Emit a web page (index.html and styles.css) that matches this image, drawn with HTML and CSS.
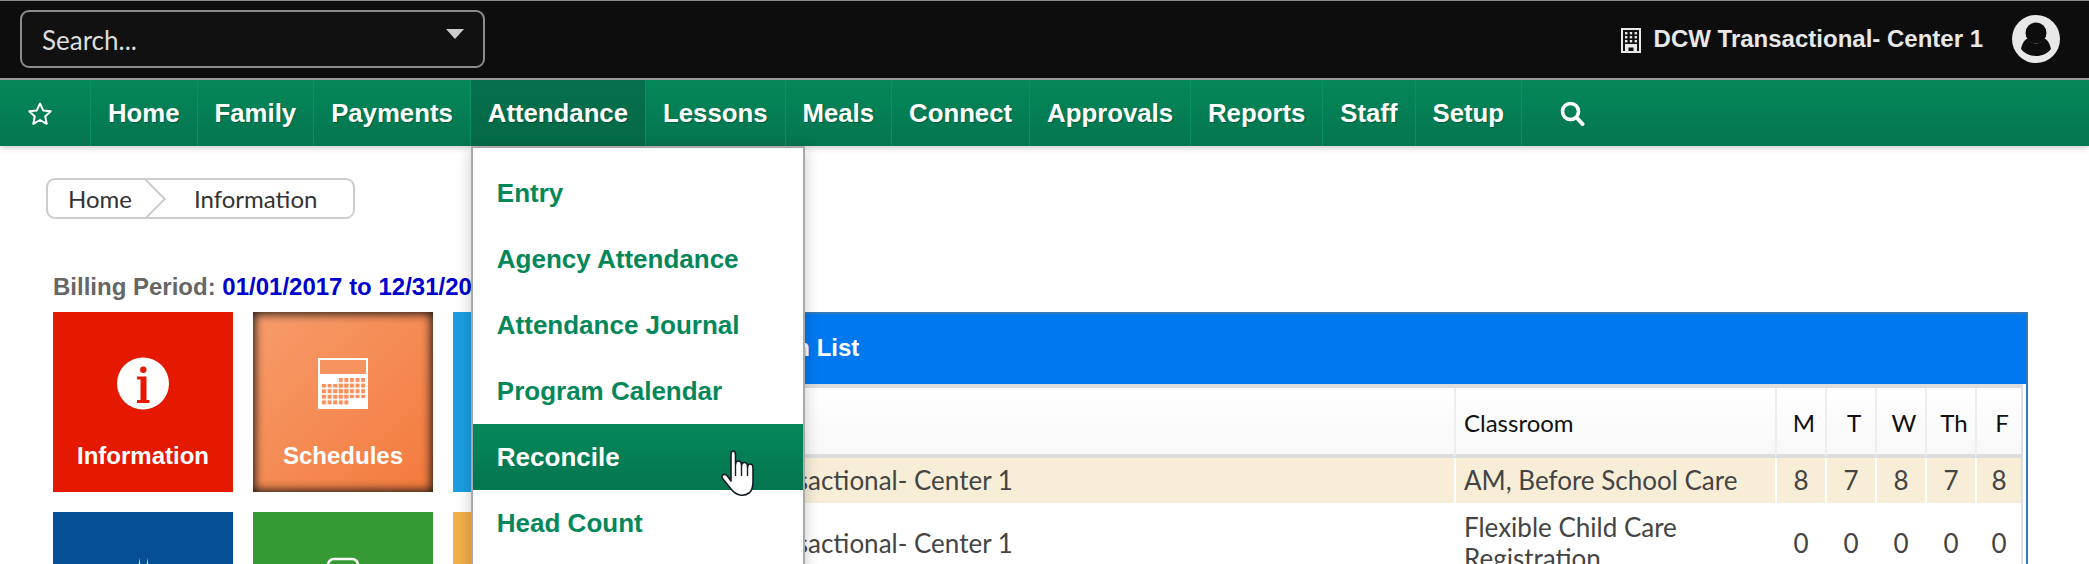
FILE: index.html
```html
<!DOCTYPE html>
<html lang="en">
<head>
<meta charset="utf-8">
<title>Information</title>
<link rel="stylesheet" href="styles.css">
</head>
<body>
<header class="topbar">
  <div class="search"><span>Search...</span><i class="caret"></i></div>
  <div class="account">
    <svg class="building" viewBox="0 0 20 25" width="20" height="25">
      <rect x="1" y="1" width="18" height="23" fill="#111" stroke="#e8e8e8" stroke-width="2"/>
      <g fill="#e8e8e8">
        <rect x="4" y="4" width="2.4" height="2.4"/><rect x="8.8" y="4" width="2.4" height="2.4"/><rect x="13.6" y="4" width="2.4" height="2.4"/>
        <rect x="4" y="8" width="2.4" height="2.4"/><rect x="8.8" y="8" width="2.4" height="2.4"/><rect x="13.6" y="8" width="2.4" height="2.4"/>
        <rect x="4" y="12" width="2.4" height="2.4"/><rect x="8.8" y="12" width="2.4" height="2.4"/><rect x="13.6" y="12" width="2.4" height="2.4"/>
        <path d="M4 16h12v7h-3.5v-3.5h-5V23H4z"/>
      </g>
    </svg>
    <span class="center-name">DCW Transactional- Center 1</span>
    <svg class="avatar" viewBox="0 0 48 48" width="48" height="48">
      <circle cx="24" cy="24" r="24" fill="#e8e8e8"/>
      <circle cx="24" cy="18" r="10.5" fill="#0d0d0d"/>
      <path d="M9 34c1-5 3-9 6.500-10.500C18 27 21 28.500 24 28.500s6-1.500 8.500-5C36 25 38 29 39 34c-3.500 4.500-9 7-15 7S12.500 38.500 9 34z" fill="#0d0d0d"/>
    </svg>
  </div>
</header>

<nav class="navbar">
  <ul class="nav-list">
    <li class="nav-item nav-star">
      <svg viewBox="0 0 26 25" width="26" height="25"><path d="M13 2.500l3.200 6.900 7.500.9-5.500 5.100 1.500 7.400L13 19l-6.700 3.800 1.500-7.400-5.500-5.100 7.500-.9z" fill="none" stroke="#fff" stroke-width="2" stroke-linejoin="round"/></svg>
    </li>
    <li class="nav-item">Home</li>
    <li class="nav-item">Family</li>
    <li class="nav-item">Payments</li>
    <li class="nav-item nav-active">Attendance
      <ul class="dropdown">
        <li class="drop-item">Entry</li>
        <li class="drop-item">Agency Attendance</li>
        <li class="drop-item">Attendance Journal</li>
        <li class="drop-item">Program Calendar</li>
        <li class="drop-item drop-hover">Reconcile
          <svg class="hand" viewBox="0 0 34 47" width="34" height="47">
            <path d="M10 31V4.500Q10 1 12.200 1t2.300 3.500V14q.5-3 3-3t3 3v1q.5-2.500 3-2.500t3 3V17q.5-3 2.800-3t2.700 4v14q0 8-4 11t-9 2q-5-1-9-6l-8-10q-2-3 0-4.200t4.200 1z" fill="#fff" stroke="#141b24" stroke-width="1.600" stroke-linejoin="round"/>
            <path d="M14.500 14v12M20.500 15v11M26.500 17v9" fill="none" stroke="#141b24" stroke-width="1.400"/>
          </svg>
        </li>
        <li class="drop-item">Head Count</li>
      </ul>
    </li>
    <li class="nav-item">Lessons</li>
    <li class="nav-item">Meals</li>
    <li class="nav-item">Connect</li>
    <li class="nav-item">Approvals</li>
    <li class="nav-item">Reports</li>
    <li class="nav-item">Staff</li>
    <li class="nav-item">Setup</li>
    <li class="nav-search">
      <svg viewBox="0 0 25 25" width="25" height="25"><circle cx="10.500" cy="10.500" r="8" fill="none" stroke="#fff" stroke-width="3.600"/><path d="M16.500 16.500l6 6.500" stroke="#fff" stroke-width="4" stroke-linecap="round"/></svg>
    </li>
  </ul>
</nav>

<main class="content">
  <div class="crumbs"><span class="crumb crumb-first">Home</span><span class="crumb">Information</span></div>
  <p class="billing">Billing Period: <b class="billing-dates">01/01/2017 to 12/31/2017</b></p>
  <div class="columns">
    <div class="tiles">
      <div class="tile tile-red">
        <svg viewBox="0 0 52 52" width="52" height="53"><circle cx="26" cy="26" r="26" fill="#fff"/><circle cx="26.300" cy="12.300" r="3.200" fill="#e41900"/><path d="M20 19h9.500v23.500h3v3H20v-3h3.500V22H20z" fill="#e41900"/></svg>
        <span class="tile-label">Information</span>
      </div>
      <div class="tile tile-orange">
        <svg viewBox="0 0 52 53" width="52" height="53">
          <defs><pattern id="cells" width="5.600" height="5.600" patternUnits="userSpaceOnUse" x="5" y="21"><rect width="4" height="4" fill="#f98f5c"/></pattern></defs>
          <rect x="1" y="1" width="50" height="51" fill="#fff"/>
          <rect x="3" y="3" width="46" height="14" fill="#f6935f"/>
          <rect x="20" y="21" width="28" height="20" fill="url(#cells)"/>
          <rect x="5" y="27" width="28" height="21" fill="url(#cells)"/>
        </svg>
        <span class="tile-label">Schedules</span>
      </div>
      <div class="tile tile-sky"></div>
      <div class="tile tile-navy">
        <svg viewBox="0 0 52 53" width="52" height="53"><path d="M21 14L22.500 1 24 14zM29 14L30.500 1 32 14z" fill="#dce8f4"/></svg>
      </div>
      <div class="tile tile-green">
        <svg viewBox="0 0 52 53" width="52" height="53"><rect x="11" y="2" width="30" height="40" rx="6" fill="none" stroke="#fff" stroke-width="2.500"/></svg>
      </div>
      <div class="tile tile-amber"></div>
    </div>
    <section class="panel">
      <h2 class="panel-title">Registration List</h2>
      <table class="grid">
        <colgroup>
          <col class="col-main"><col class="col-class"><col class="col-day"><col class="col-day"><col class="col-day"><col class="col-day"><col class="col-last">
        </colgroup>
        <thead>
          <tr><th class="cell-center">Center</th><th>Classroom</th><th class="day">M</th><th class="day">T</th><th class="day">W</th><th class="day">Th</th><th class="day">F</th></tr>
        </thead>
        <tbody>
          <tr class="row-current"><td class="cell-center">DCW Transactional- Center 1</td><td>AM, Before School Care</td><td class="num">8</td><td class="num">7</td><td class="num">8</td><td class="num">7</td><td class="num">8</td></tr>
          <tr class="row-tall"><td class="cell-center">DCW Transactional- Center 1</td><td>Flexible Child Care Registration</td><td class="num">0</td><td class="num">0</td><td class="num">0</td><td class="num">0</td><td class="num">0</td></tr>
        </tbody>
      </table>
    </section>
  </div>
</main>
</body>
</html>
```

FILE: styles.css
```css
* { box-sizing: border-box; }
html, body { height: 564px; overflow: hidden; }
body { margin: 0; background: #fff; font-family: "Liberation Sans", Arial, sans-serif; color: #333; }

.topbar {
  height: 80px;
  background: #0d0d0d;
  border-top: 1px solid #8a8a8a;
  border-bottom: 2px solid #a0a0a0;
  display: flex;
  align-items: center;
  justify-content: space-between;
  padding: 0 29px 0 20px;
}
.search {
  width: 465px;
  height: 58px;
  margin-top: -1px;
  background: #111;
  border: 2px solid #8c8c8c;
  border-radius: 9px;
  display: flex;
  align-items: center;
  justify-content: space-between;
  padding: 2px 19px 0 20px;
  font: 26px Lato, sans-serif;
  color: #ddd;
}
.caret {
  width: 0; height: 0;
  margin-top: -12px;
  border-left: 9px solid transparent;
  border-right: 9px solid transparent;
  border-top: 10px solid #ccc;
}
.account { display: flex; align-items: center; margin-top: -1px; }
.building { margin-top: 3px; }
.center-name { margin: 0 29px 0 13px; font-size: 24px; font-weight: 700; color: #e8e8e8; }

.navbar {
  height: 66px;
  background: linear-gradient(#04885a, #05754f);
  box-shadow: 0 2px 6px rgba(0,0,0,.2);
  position: relative;
  z-index: 5;
}
.nav-list { list-style: none; margin: 0; padding: 0; display: flex; height: 100%; }
.nav-item {
  position: relative;
  display: flex;
  align-items: center;
  padding: 0 17px;
  border-right: 1px solid #0a9160;
  font-size: 25.75px;
  font-weight: 700;
  color: #fff;
  text-shadow: 1px 1px 1px rgba(0,0,0,.25);
}
.nav-star { width: 91px; padding: 0 0 0 27px; }
.nav-active { background: linear-gradient(#056f4d, #056a47); }
.nav-search { display: flex; align-items: center; padding-left: 38px; }

.dropdown {
  list-style: none;
  position: absolute;
  top: 100%;
  left: 0;
  width: 334px;
  height: 430px;
  margin: 0;
  padding: 12px 0 0;
  background: #fff;
  border: 2px solid #aaa;
  box-shadow: 0 4px 14px rgba(0,0,0,.22);
  font-size: 26px;
  text-shadow: none;
}
.drop-item {
  position: relative;
  height: 66px;
  display: flex;
  align-items: center;
  padding-left: 24px;
  color: #04885a;
}
.drop-hover { background: linear-gradient(#04885a, #05754f); color: #fff; }
.hand { position: absolute; left: 248px; top: 26px; }

.crumbs {
  width: 309px;
  height: 41px;
  margin: 32px 0 0 46px;
  border: 2px solid #ccc;
  border-radius: 9px;
  display: flex;
  align-items: center;
  overflow: hidden;
  font: 24px Lato, sans-serif;
  color: #333;
}
.crumb { padding-left: 20px; }
.crumb-first { position: relative; width: 126px; height: 100%; display: flex; align-items: center; }
.crumb-first::after {
  content: "";
  position: absolute;
  right: 14px;
  top: 4px;
  width: 28px;
  height: 28px;
  border-top: 2px solid #ccc;
  border-right: 2px solid #ccc;
  transform: rotate(45deg);
}

.billing { margin: 53px 0 0 53px; height: 40px; font-size: 24px; font-weight: 700; color: #666; line-height: 30px; }
.billing-dates { color: #0000cc; }

.columns { display: flex; margin-left: 53px; gap: 20px; }
.tiles { display: grid; grid-template-columns: repeat(3, 180px); grid-auto-rows: 180px; gap: 20px; flex: none; }
.tile { display: flex; flex-direction: column; align-items: center; padding-top: 45px; color: #fff; }
.tile-label { margin-top: 31px; font-size: 24px; font-weight: 700; line-height: 30px; }
.tile-red { background: #e41900; }
.tile-orange { background: linear-gradient(135deg, #f79c6c, #f37a3c); box-shadow: inset 0 0 10px 2px #221a16; }
.tile-sky { background: #1b9fe2; }
.tile-navy { background: #055095; }
.tile-green { background: #359a33; }
.tile-amber { background: #f3b04a; }

.panel { width: 1375px; height: 400px; border: 2px solid #337ab7; border-bottom: 0; padding-right: 3px; }
.panel-title {
  margin: 0 -3px 0 0;
  height: 70px;
  background: #0078f0;
  color: #fff;
  font-size: 24px;
  line-height: 68px;
  padding-left: 15px;
}
.grid {
  width: 1368px;
  table-layout: fixed;
  border-collapse: separate;
  border-spacing: 0;
  border-top: 4px solid #ddd;
  border-right: 2px solid #ddd;
  font: 26px/31px Lato, sans-serif;
  color: #444;
}
.col-main { width: 799px; }
.col-class { width: 321px; }
.col-day { width: 50px; }
.col-last { width: 46px; }
.grid th {
  height: 70px;
  padding: 2px 8px 0;
  text-align: left;
  font-size: 24px;
  font-weight: 400;
  color: #111;
  background: linear-gradient(#fff, #f8f8f8);
  border-left: 2px solid #eee;
  border-bottom: 4px solid #ddd;
}
.grid th.day { padding: 2px 0 0 6px; text-align: center; }
.grid td { padding: 7px 8px; border-left: 2px solid #fff; }
.grid td.num { padding: 7px 0; text-align: center; }
.grid .cell-center { padding-left: 21px; }
.row-current td { background: #f8eed8; }
.row-tall td, .grid .row-tall td.num { padding-top: 9px; }
```
